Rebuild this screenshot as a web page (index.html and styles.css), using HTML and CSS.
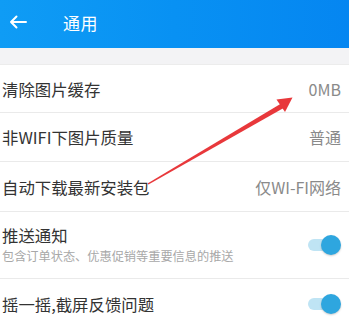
FILE: index.html
```html
<!DOCTYPE html>
<html lang="zh">
<head>
<meta charset="utf-8">
<link rel="stylesheet" href="styles.css">
</head>
<body>
<div class="page">
  <header class="topbar">
    <svg class="back" width="18" height="14" viewBox="0 0 18 14"><path d="M17 7H2M7.5 1.5L2 7l5.5 5.5" fill="none" stroke="#fff" stroke-width="2" stroke-linecap="round" stroke-linejoin="round"/></svg>
    <span class="title">通用</span>
  </header>
  <div class="gap"></div>
  <ul class="list">
    <li class="row r1"><span class="label">清除图片缓存</span><span class="value">0MB</span></li>
    <li class="row r2"><span class="label">非WIFI下图片质量</span><span class="value">普通</span></li>
    <li class="row r3"><span class="label">自动下载最新安装包</span><span class="value">仅WI-FI网络</span></li>
    <li class="row r4">
      <div class="textcol"><span class="label">推送通知</span><span class="sub">包含订单状态、优惠促销等重要信息的推送</span></div>
      <span class="toggle"><span class="knob"></span></span>
    </li>
    <li class="row r5"><span class="label">摇一摇,截屏反馈问题</span><span class="toggle"><span class="knob"></span></span></li>
  </ul>
  <svg class="arrow" width="349" height="319" viewBox="0 0 349 319">
    <polygon points="147.5,183.5 282,103 284.5,107.5 148.5,184.5" fill="#e8383b"/>
    <polygon points="292.5,97.5 276.5,99.5 285,112" fill="#e8383b"/>
  </svg>
</div>
</body>
</html>
```

FILE: styles.css
```css
* { box-sizing: border-box; }
html, body { margin: 0; padding: 0; background: #fff; }
body { font-family: "Noto Sans CJK SC", "Noto Sans", sans-serif; }
.page { position: relative; width: 349px; height: 319px; overflow: hidden; }
.topbar {
  height: 48px;
  background: linear-gradient(90deg, #0f9cf5 0%, #0891f3 50%, #0586f1 100%);
  display: flex;
  align-items: center;
  padding-left: 9px;
  color: #fff;
}
.back { display: block; margin-top: -4px; }
.title { font-size: 17px; margin-left: 36px; margin-top: -4px; letter-spacing: 0.5px; }
.gap { height: 17px; background: #f3f3f5; border-bottom: 1px solid #ececec; }
.list { list-style: none; margin: 0; padding: 0; }
.row {
  display: flex;
  align-items: center;
  justify-content: space-between;
  padding: 0 8px 0 2px;
  border-bottom: 1px solid #eaeaea;
}
.r1 { height: 48px; }
.r2 { height: 49px; }
.r3 { height: 50px; }
.r4 { height: 67px; }
.r5 { height: 50px; border-bottom: none; }
.label { font-size: 16.4px; color: #333; line-height: 20px; }
.value { font-size: 16px; color: #8a8a8a; line-height: 20px; }
.textcol { display: flex; flex-direction: column; gap: 2px; }
.sub { font-size: 12.2px; color: #a8a8a8; line-height: 18px; }
.toggle {
  position: relative;
  width: 33px;
  height: 20px;
  display: flex;
  align-items: center;
}
.toggle::before {
  content: "";
  display: block;
  width: 27px;
  height: 12px;
  border-radius: 6px;
  background: #bfe4f4;
}
.knob {
  position: absolute;
  right: 0;
  top: 0;
  width: 20px;
  height: 20px;
  border-radius: 50%;
  background: #2ea6df;
  box-shadow: 0 1px 2px rgba(0,0,0,0.2);
}
.arrow { position: absolute; left: 0; top: 0; pointer-events: none; }
```
